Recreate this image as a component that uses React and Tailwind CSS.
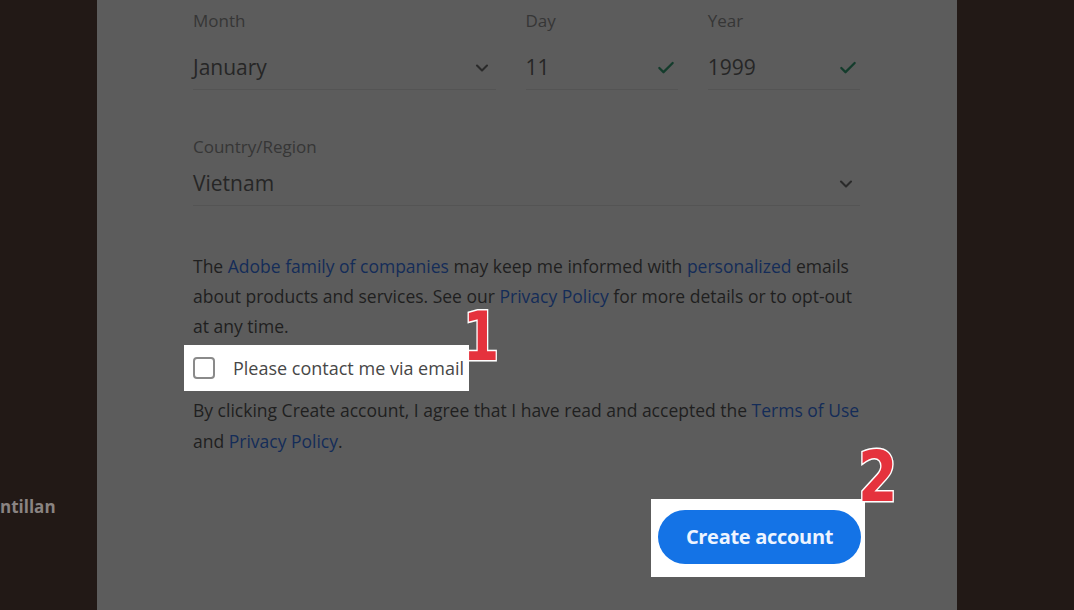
import { ChevronDown, Check } from 'lucide-react'

const font = "font-['Open_Sans',sans-serif]"

function Field({ label, value, icon, className }) {
  return (
    <div className={className}>
      <div className="text-[17px] leading-[22px] text-[#363636]">{label}</div>
      <div className="mt-[15px] flex h-[43px] items-center justify-between border-b border-[#545454]">
        <span className="text-[21px] text-[#262626]">{value}</span>
        {icon}
      </div>
    </div>
  )
}

function Digit({ children, className }) {
  return (
    <span
      className={
        "absolute origin-top-left font-['DejaVu_Sans_Condensed','DejaVu_Sans',sans-serif] font-bold leading-none text-[#e5323d] [-webkit-text-stroke:3px_white] [paint-order:stroke_fill] " +
        className
      }
    >
      {children}
    </span>
  )
}

export default function App() {
  const link = 'text-[#142c58]'
  return (
    <div className={`flex h-[610px] w-full overflow-hidden bg-[#231a17] ${font}`}>
      <div className="flex w-[97px] shrink-0 items-start overflow-hidden bg-[#221916]">
        <span className="mt-[494px] text-[17px] font-bold text-[#8a8482]">ntillan</span>
      </div>

      <div className="w-[860px] shrink-0 bg-[#5c5c5c] pl-[96px] pt-[10px]">
        <div className="w-[667px]">
          <div className="flex gap-[30px]">
            <Field
              className="w-[304px]"
              label="Month"
              value="January"
              icon={<ChevronDown size={20} strokeWidth={2.5} className="mr-[4px] text-[#2a2a2a]" />}
            />
            <Field
              className="w-[153px]"
              label="Day"
              value="11"
              icon={<Check size={20} strokeWidth={2.75} className="mr-[2px] text-[#143c2c]" />}
            />
            <Field
              className="w-[153px]"
              label="Year"
              value="1999"
              icon={<Check size={20} strokeWidth={2.75} className="mr-[2px] text-[#143c2c]" />}
            />
          </div>

          <div className="mt-[46px]">
            <div className="text-[17px] leading-[22px] text-[#363636]">Country/Region</div>
            <div className="mt-[5px] flex h-[43px] items-center justify-between border-b border-[#545454]">
              <span className="text-[21px] text-[#262626]">Vietnam</span>
              <ChevronDown size={20} strokeWidth={2.5} className="mr-[4px] text-[#2a2a2a]" />
            </div>
          </div>

          <p className="mt-[45px] whitespace-nowrap text-[17.5px] leading-[30px] text-[#1f1f1f]">
            The <span className={link}>Adobe family of companies</span> may keep me informed with{' '}
            <span className={link}>personalized</span> emails
            <br />
            about products and services. See our <span className={link}>Privacy Policy</span> for more details or to opt-out
            <br />
            at any time.
          </p>

          <div className="relative mt-[4px] -ml-[9px] flex h-[46px] w-[285px] items-center gap-[18px] bg-white pl-[9px]">
            <span className="h-[22px] w-[22px] rounded-[4px] border-2 border-[#8a8a8a]" />
            <span className="text-[18px] text-[#474747]">Please contact me via email</span>
            <Digit className="left-[279px] top-[-42px] scale-x-[0.85] text-[68px]">1</Digit>
          </div>

          <p className="mt-[4px] whitespace-nowrap text-[17.5px] leading-[31px] text-[#1f1f1f]">
            By clicking Create account, I agree that I have read and accepted the{' '}
            <span className={link}>Terms of Use</span>
            <br />
            and <span className={link}>Privacy Policy</span>.
          </p>

          <div className="-mr-[5px] mt-[42px] flex justify-end">
            <div className="relative h-[78px] w-[214px] bg-white pl-[7px] pt-[11px]">
              <button className="flex h-[54px] w-[203px] items-center justify-center rounded-full bg-[#1473e6] text-[20px] font-bold tracking-[-0.3px] text-[#eef4ff]">
                Create account
              </button>
              <Digit className="left-[207px] top-[-57px] scale-x-[0.9] text-[70px]">2</Digit>
            </div>
          </div>
        </div>
      </div>

      <div className="flex-1 bg-[#221916]" />
    </div>
  )
}
